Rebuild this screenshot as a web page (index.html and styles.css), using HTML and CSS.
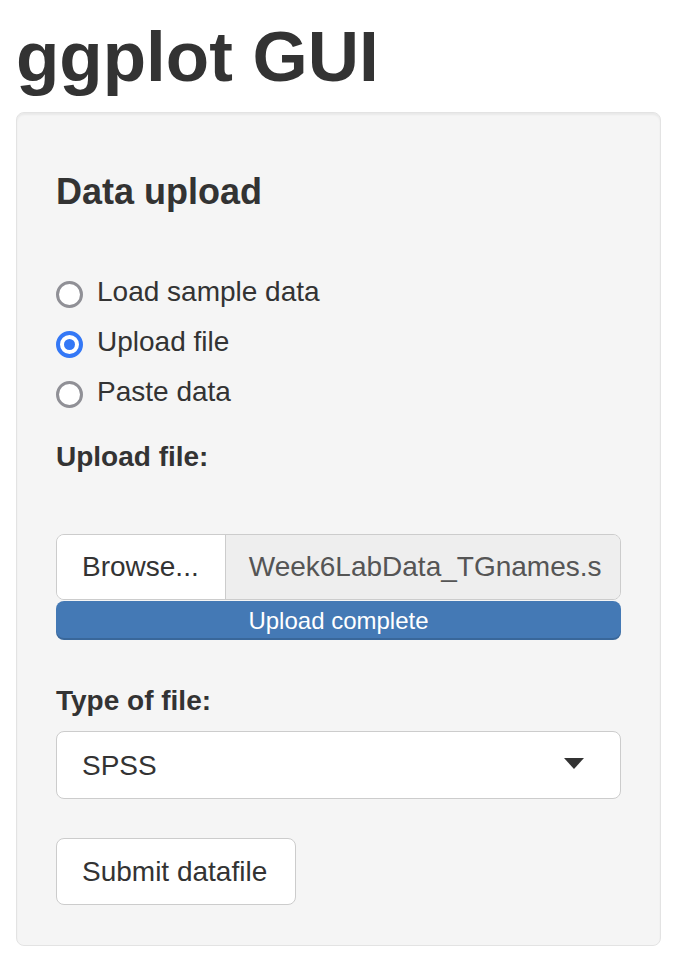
FILE: index.html
```html
<!DOCTYPE html>
<html lang="en">
<head>
<meta charset="utf-8">
<title>ggplot GUI</title>
<link rel="stylesheet" href="styles.css">
</head>
<body>
<div class="page">
  <h1 class="title">ggplot GUI</h1>
  <div class="well">
    <h4 class="panel-heading">Data upload</h4>

    <div class="radio-group">
      <label class="radio-row">
        <span class="radio-dot"></span>
        <span class="radio-text">Load sample data</span>
      </label>
      <label class="radio-row">
        <span class="radio-dot checked"></span>
        <span class="radio-text">Upload file</span>
      </label>
      <label class="radio-row">
        <span class="radio-dot"></span>
        <span class="radio-text">Paste data</span>
      </label>
    </div>

    <div class="field-label upload-label">Upload file:</div>

    <div class="file-group">
      <div class="browse-btn">Browse...</div>
      <div class="file-name"><span class="file-text">Week6LabData_TGnames.s</span></div>
    </div>
    <div class="progress">Upload complete</div>

    <div class="field-label type-label">Type of file:</div>
    <div class="select-box">
      <span class="select-value">SPSS</span>
      <span class="caret"></span>
    </div>

    <div class="submit-btn">Submit datafile</div>
  </div>
</div>
</body>
</html>
```

FILE: styles.css
```css
html, body {
  margin: 0;
  padding: 0;
  background: #ffffff;
}

body {
  font-family: "Liberation Sans", Arial, Helvetica, sans-serif;
  color: #333333;
  font-size: 28px;
  line-height: 40px;
}

.page {
  padding: 0 15px 0 16px;
}

.title {
  margin: 15px 0 13px 0;
  font-size: 71px;
  line-height: 84px;
  font-weight: bold;
  color: #333333;
}

.well {
  background: #f5f5f5;
  border: 1px solid #e3e3e3;
  border-radius: 8px;
  box-shadow: inset 0 2px 2px rgba(0, 0, 0, 0.05);
  padding: 39px 39px 40px 39px;
}

.panel-heading {
  margin: 20px 0 0 0;
  font-size: 36px;
  line-height: 40px;
  font-weight: bold;
}

.radio-group {
  margin-top: 60px;
  display: flex;
  flex-direction: column;
  gap: 10px;
}

.radio-row {
  display: flex;
  align-items: center;
  height: 40px;
}

.radio-dot {
  box-sizing: border-box;
  width: 27px;
  height: 27px;
  border-radius: 50%;
  border: 3px solid #909096;
  background: #ffffff;
  margin-top: 4px;
  margin-right: 14px;
  display: flex;
  align-items: center;
  justify-content: center;
  flex: none;
}

.radio-dot.checked {
  border: 4px solid #3478f6;
}

.radio-dot.checked::after {
  content: "";
  width: 11px;
  height: 11px;
  border-radius: 50%;
  background: #3478f6;
}

.field-label {
  font-weight: bold;
}

.upload-label {
  margin-top: 25px;
}

.file-group {
  margin-top: 57px;
  display: flex;
  height: 66px;
  box-sizing: border-box;
  border: 1px solid #cccccc;
  border-radius: 8px;
  overflow: hidden;
}

.browse-btn {
  background: #ffffff;
  padding: 0 26px 0 25px;
  display: flex;
  align-items: center;
  border-right: 1px solid #cccccc;
  color: #333333;
}

.file-name {
  flex: 1;
  min-width: 0;
  background: #eeeeee;
  padding: 0 0 0 23px;
  display: flex;
  align-items: center;
  color: #555555;
  overflow: hidden;
}

.file-text {
  white-space: nowrap;
}

.progress {
  margin-top: 1px;
  height: 39px;
  border-radius: 8px;
  background: #4479b5;
  box-shadow: inset 0 -2px 0 rgba(0, 0, 0, 0.15);
  color: #ffffff;
  font-size: 24px;
  line-height: 39px;
  text-align: center;
}

.type-label {
  margin-top: 41px;
}

.select-box {
  margin-top: 10px;
  box-sizing: border-box;
  height: 68px;
  background: #ffffff;
  border: 1px solid #cccccc;
  border-radius: 8px;
  display: flex;
  align-items: center;
  justify-content: space-between;
  padding: 0 36px 0 25px;
}

.select-value {
  margin-top: 2px;
}

.caret {
  width: 0;
  height: 0;
  border-left: 10px solid transparent;
  border-right: 10px solid transparent;
  border-top: 11px solid #333333;
  margin-bottom: 3px;
}

.submit-btn {
  margin-top: 39px;
  display: inline-block;
  box-sizing: border-box;
  height: 67px;
  padding: 13px 28px 12px 25px;
  background: #ffffff;
  border: 1px solid #cccccc;
  border-radius: 8px;
  vertical-align: top;
}
```
